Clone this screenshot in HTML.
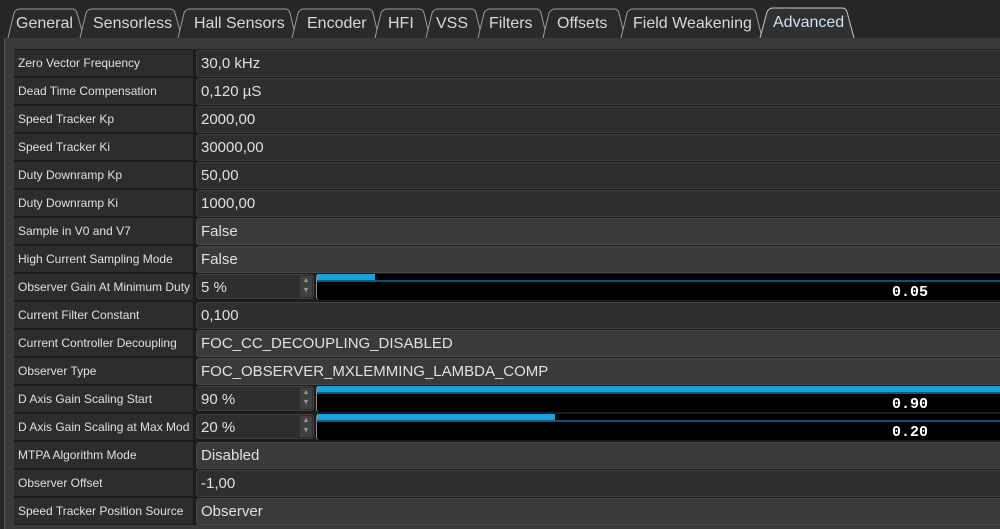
<!DOCTYPE html><html><head><style>
body{margin:0;width:1000px;height:529px;background:#262626;overflow:hidden;font-family:"Liberation Sans",sans-serif;position:relative}
.t{position:absolute;color:#d8d8d8;font-size:16px;top:15px}
.panel{position:absolute;left:4px;top:38px;width:996px;height:491px;background:#3a3a3a;border-left:1px solid #555}
.row{position:absolute;left:14px;width:986px;height:28px;background:#1c1c1c}
.lab{position:absolute;left:0;top:1px;width:179px;height:26px;background:#2c2c2c;color:#e0e0e0;font-size:12px;line-height:27px;padding-left:4px;box-sizing:border-box}
.val{position:absolute;left:182px;top:1px;right:0;height:25px;background:#2e2e2e;border:1px solid #3e3e3e;border-right:none;border-radius:3px 0 0 3px;color:#e0e0e0;font-size:15px;line-height:26px;padding-left:4px}
.cb{background:#3a3a3a;border-color:#474747}
.spin{position:absolute;left:182px;top:1px;width:118px;height:25px;background:#2e2e2e;border:1px solid #3e3e3e;border-radius:3px;color:#e0e0e0;font-size:15px;line-height:25px;padding-left:4px;box-sizing:border-box}
.arr{position:absolute;right:1px;top:1px;width:12px;height:21px;background:#404040;border-radius:2px;color:#999;font-size:7px;line-height:10px;text-align:center}
.bar{position:absolute;left:302px;top:1px;right:0;height:26px;background:#000;border-left:1px solid #888;border-radius:3px 0 0 3px}
.fill{position:absolute;left:0;top:0;height:6px;background:#1ea0dc;border-bottom:2px solid #0a5a8a}
.line{position:absolute;left:0;right:0;top:6px;height:2px;background:#0b4f7a}
.num{position:absolute;left:575px;top:10px;font-family:"Liberation Mono",monospace;font-weight:bold;color:#fff;font-size:15px}
</style></head><body>
<svg style="position:absolute;left:0;top:0" width="1000" height="40">
<g fill="#2a2a2a" stroke="#9a9a9a" stroke-width="1">
<path d="M8 38 L14 13 Q16 9 20 9 L72 9 Q76 9 77 13 L84 38"/>
<path d="M80 38 L86 13 Q88 9 92 9 L170 9 Q174 9 175 13 L182 38"/>
<path d="M178 38 L184 13 Q186 9 190 9 L285 9 Q289 9 290 13 L296 38"/>
<path d="M292 38 L298 13 Q300 9 304 9 L368 9 Q372 9 373 13 L379 38"/>
<path d="M375 38 L381 13 Q383 9 387 9 L419 9 Q423 9 424 13 L430 38"/>
<path d="M426 38 L432 13 Q434 9 438 9 L471 9 Q475 9 476 13 L482 38"/>
<path d="M478 38 L484 13 Q486 9 490 9 L536 9 Q540 9 541 13 L547 38"/>
<path d="M543 38 L549 13 Q551 9 555 9 L614 9 Q618 9 619 13 L625 38"/>
<path d="M621 38 L627 13 Q629 9 633 9 L751 9 Q755 9 756 13 L762 38"/>
<path d="M760 38 L767 12 Q769 8 773 8 L842 8 Q846 8 847 12 L854 38" fill="#303030" stroke="#c8c8c8"/>
</g></svg>
<span class="t" style="left:16px">General</span>
<span class="t" style="left:93px">Sensorless</span>
<span class="t" style="left:194px">Hall Sensors</span>
<span class="t" style="left:307px">Encoder</span>
<span class="t" style="left:388px">HFI</span>
<span class="t" style="left:436px">VSS</span>
<span class="t" style="left:489px">Filters</span>
<span class="t" style="left:557px">Offsets</span>
<span class="t" style="left:633px">Field Weakening</span>
<span class="t" style="left:773px;top:14px;color:#cfe3f5">Advanced</span>
<div class="panel"></div>

<div class="row" style="top:49px"><div class="lab">Zero Vector Frequency</div><div class="val">30,0 kHz</div></div>
<div class="row" style="top:77px"><div class="lab">Dead Time Compensation</div><div class="val">0,120 µS</div></div>
<div class="row" style="top:105px"><div class="lab">Speed Tracker Kp</div><div class="val">2000,00</div></div>
<div class="row" style="top:133px"><div class="lab">Speed Tracker Ki</div><div class="val">30000,00</div></div>
<div class="row" style="top:161px"><div class="lab">Duty Downramp Kp</div><div class="val">50,00</div></div>
<div class="row" style="top:189px"><div class="lab">Duty Downramp Ki</div><div class="val">1000,00</div></div>
<div class="row" style="top:217px"><div class="lab">Sample in V0 and V7</div><div class="val cb">False</div></div>
<div class="row" style="top:245px"><div class="lab">High Current Sampling Mode</div><div class="val cb">False</div></div>
<div class="row" style="top:273px"><div class="lab">Observer Gain At Minimum Duty</div><div class="spin">5 %<div class="arr">▲<br>▼</div></div><div class="bar"><div class="line"></div><div class="fill" style="width:58px"></div><div class="num">0.05</div></div></div>
<div class="row" style="top:301px"><div class="lab">Current Filter Constant</div><div class="val">0,100</div></div>
<div class="row" style="top:329px"><div class="lab">Current Controller Decoupling</div><div class="val cb">FOC_CC_DECOUPLING_DISABLED</div></div>
<div class="row" style="top:357px"><div class="lab">Observer Type</div><div class="val cb">FOC_OBSERVER_MXLEMMING_LAMBDA_COMP</div></div>
<div class="row" style="top:385px"><div class="lab">D Axis Gain Scaling Start</div><div class="spin">90 %<div class="arr">▲<br>▼</div></div><div class="bar"><div class="line"></div><div class="fill" style="width:100%"></div><div class="num">0.90</div></div></div>
<div class="row" style="top:413px"><div class="lab">D Axis Gain Scaling at Max Mod</div><div class="spin">20 %<div class="arr">▲<br>▼</div></div><div class="bar"><div class="line"></div><div class="fill" style="width:238px"></div><div class="num">0.20</div></div></div>
<div class="row" style="top:441px"><div class="lab">MTPA Algorithm Mode</div><div class="val cb">Disabled</div></div>
<div class="row" style="top:469px"><div class="lab">Observer Offset</div><div class="val">-1,00</div></div>
<div class="row" style="top:497px"><div class="lab">Speed Tracker Position Source</div><div class="val cb">Observer</div></div>
</body></html>
